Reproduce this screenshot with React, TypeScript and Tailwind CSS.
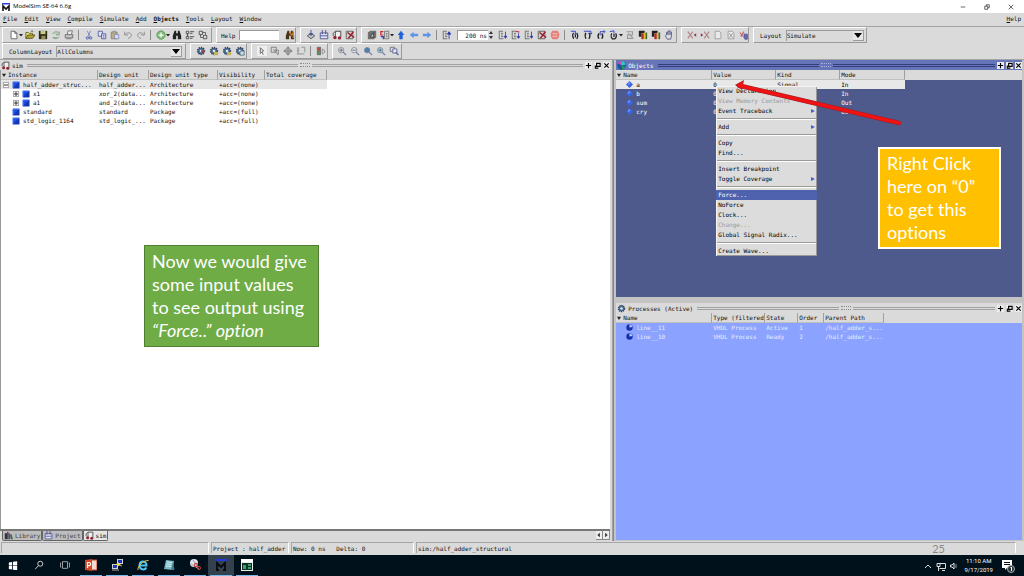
import type { ReactNode } from 'react'
import { clsx } from 'clsx'

/* ---------- icons, all on a 12x12 grid ---------- */

const page = <path d="M2.500 1.500h5l2 2v7h-7z" fill="#e9e9e9" stroke="#999" />

const gear = (
  <>
    <circle cx="6" cy="6" r="4" fill="#4d6f9c" stroke="#33445c" strokeWidth="2" strokeDasharray="1.600 1" />
    <circle cx="6" cy="6" r="1.600" fill="#dfe6ee" />
  </>
)

const lens = (fill: string) => (
  <>
    <circle cx="5" cy="5" r="3.200" fill={fill} stroke="#7b8490" />
    <path d="M7.500 7.500l3.500 3.500" stroke="#7a7fae" strokeWidth="1.500" />
  </>
)

const lines = (
  <path d="M1.500 1v10M1.500 1.500h4.500M1.500 10.500h5M3.500 4h2.500M3.500 6h2M3.500 8h3" fill="none" stroke="#666" />
)

const binoculars = (color: string) => (
  <path d="M3 1h2v3h2V1h2l2 6v4H7V7H5v4H1V7z" fill={color} />
)

const icons: Record<string, ReactNode> = {
  new: <path d="M2.500 1.500h4.500l2.500 2.500v6.500h-7zM7 1.500v2.500h2.500" fill="#fff" stroke="#555" />,
  open: (
    <>
      <path d="M1 10V3h3l1 1h4v2" fill="#e8e07c" stroke="#5e5a1c" />
      <path d="M1 10l2.500-4H12l-3 4z" fill="#b9a730" stroke="#4a4612" />
      <path d="M7 2c1-1 2-1 3 0" fill="none" stroke="#333" />
    </>
  ),
  save: (
    <>
      <path d="M1 1h10v10H1z" fill="#2c2c14" />
      <path d="M3 1h6v4H3z" fill="#c9c98a" />
      <path d="M4 7h5v4H4z" fill="#8f8f5c" />
    </>
  ),
  reload: <path d="M2 5c1-3 5-4 7-2l1-1v4H6l1-1.500M10 8c-2 3-6 3-8 1l5 0" fill="#b7cdb4" stroke="#84a384" />,
  print: (
    <>
      <path d="M4 5l1-4h5L9 5" fill="#eee" stroke="#666" />
      <path d="M1.500 5.500h9v4h-9z" fill="#c4c4c4" stroke="#666" />
      <path d="M3 10.500h6" stroke="#777" />
    </>
  ),
  cut: (
    <>
      <path d="M4 1l3 7M8 1L5 8" stroke="#6f7fc8" />
      <circle cx="4" cy="9.500" r="1.400" fill="none" stroke="#3d4fb0" />
      <circle cx="8" cy="9.500" r="1.400" fill="none" stroke="#3d4fb0" />
    </>
  ),
  copy: (
    <>
      <path d="M1.500 1.500h5v6h-5z" fill="#e2e4f6" stroke="#4a55a0" />
      <path d="M5.500 4.500h5v6h-5z" fill="#e2e4f6" stroke="#4a55a0" />
      <path d="M7 6.500h2M7 8.500h2" stroke="#4a55a0" />
    </>
  ),
  paste: (
    <>
      <path d="M1.500 2.500h7v8h-7z" fill="#b9af86" stroke="#87805e" />
      <path d="M3.500 1.500h3v2h-3z" fill="#ddd" stroke="#888" />
      <path d="M5.500 5.500h5v5h-5z" fill="#dcdff2" stroke="#8389b8" />
    </>
  ),
  undo: <path d="M2 2v4h4M2 6c3-4 8-3 8 0 0 3-3 4-4 4" fill="none" stroke="#888" />,
  redo: <path d="M10 2v4H6M10 6C7 2 2 3 2 6c0 3 3 4 4 4" fill="none" stroke="#888" />,
  add: (
    <>
      <circle cx="6" cy="6" r="5" fill="#7dbb76" stroke="#5b9a56" />
      <path d="M6 3v6M3 6h6" stroke="#fff" strokeWidth="1.500" />
    </>
  ),
  find: binoculars('#222'),
  tree: <path d="M1.500 1.500h3v3h-3zM1.500 7.500h3v3h-3zM3 4v4M6 2h5M6 4h3M6 8h5M6 10h3" fill="none" stroke="#444" />,
  link: (
    <>
      <path d="M1.500 1.500h4v4h-4zM6.500 6.500h4v4h-4z" fill="#ddd" stroke="#444" />
      <path d="M5 3h4v3M3 5v4h3" fill="none" stroke="#555" />
    </>
  ),
  findHelp: (
    <>
      {binoculars('#4a3318')}
      <path d="M5 2l3 4 2-3v7" fill="none" stroke="#d0802a" strokeWidth="1.500" />
    </>
  ),
  compile: (
    <>
      <path d="M1.500 7l4.500-3 4.500 3-4.500 3.500z" fill="#bfc2cf" stroke="#444" />
      <path d="M6 0v6M4 4l2 2.500L8 4" fill="none" stroke="#2b3a9c" />
    </>
  ),
  compileAll: (
    <>
      <path d="M1.500 3.500h9v7h-9z" fill="#e4e4ee" stroke="#444a88" />
      <path d="M4 0v5M8 0v5M2 7h8" stroke="#3542a8" />
    </>
  ),
  simulate: (
    <>
      <path d="M1.500 7V4L4 1.500h6.500V9M4 2v6" fill="#eee" stroke="#333" />
      <circle cx="3.500" cy="9" r="2" fill="#8d2430" />
      <circle cx="9" cy="9.500" r="2" fill="#8d2430" />
    </>
  ),
  stopSim: (
    <>
      <path d="M1.500 1.500h8v9h-8z" fill="#cfcfcf" stroke="#555" />
      <path d="M3 3l8 6M10 2L4 10" stroke="#9c1d26" strokeWidth="1.800" />
    </>
  ),
  dark: (
    <>
      <path d="M1 3l3-2h7v8l-3 2H1z" fill="#707070" />
      <path d="M4 8l4-5v6z" fill="#ccc" stroke="#333" />
    </>
  ),
  restart: (
    <>
      <path d="M5.500 1.500h5v9h-5z" fill="#e2e2e2" stroke="#666" />
      <path d="M7 4h2M7 6h2M7 8h2" stroke="#555" />
      <path d="M4 2H1v4h3" fill="none" stroke="#c22" strokeWidth="1.400" />
      <path d="M1 8h3v3" fill="none" stroke="#2a37b8" strokeWidth="1.400" />
    </>
  ),
  up: <path d="M6 1l4 5H8v5H4V6H2z" fill="#1d62dc" />,
  left: <path d="M1 6l4.500-4v2.500H11v3H5.500V10z" fill="#5f95e8" />,
  right: <path d="M11 6L6.500 2v2.500H1v3h5.500V10z" fill="#5f95e8" />,
  runUp: (
    <>
      {lines}
      <path d="M8.500 11V4M6.500 5l2-3 2 3z" fill="#2b39ad" stroke="#2b39ad" />
    </>
  ),
  run: (
    <>
      {lines}
      <path d="M9 2v7M7.500 7.500L9 10l1.500-2.500z" fill="#2b39ad" stroke="#2b39ad" />
    </>
  ),
  runRed: (
    <>
      {lines}
      <path d="M6 1.500l4 1" stroke="#c5303a" strokeWidth="1.500" />
      <path d="M9 4v5M7.500 8L9 10l1.500-2z" fill="#2b39ad" stroke="#2b39ad" />
    </>
  ),
  stop: (
    <>
      <path d="M3 1h6l2 3v4l-2 3H3L1 8V4z" fill="#e58078" />
      <path d="M3 4.500h6M3 7.500h6" stroke="#f6cfca" />
    </>
  ),
  stepIn: (
    <>
      <path d="M4.500 3.500C3 5 3 8 4.500 10.500M8 3.500c1.500 2 1.500 5 0 7M6.500 6v3" fill="none" stroke="#222" strokeWidth="1.500" />
      <path d="M1 1.500h5.500v4M5 4.500L6.500 6 8 4.500" fill="none" stroke="#3c49c0" strokeWidth="1.200" />
    </>
  ),
  stepOver: (
    <>
      <path d="M3.500 3.500C2.500 5 2.500 8 3.500 10.500M7 3.500c1.500 2 1.500 5 0 7" fill="none" stroke="#222" strokeWidth="1.600" />
      <path d="M1 1.500h8.500v3.500M8 3.500L9.500 5 11 3.500" fill="none" stroke="#3c49c0" strokeWidth="1.200" />
    </>
  ),
  stepOut: (
    <>
      <path d="M3.500 4C2 6 2 8 3.500 10.500M7 4c1.500 2 1.500 4 0 6.500" fill="none" stroke="#222" strokeWidth="1.600" />
      <path d="M5 6.500V2h5.500M9 .500l2 1.500-2 1.500" fill="none" stroke="#3c49c0" strokeWidth="1.200" />
    </>
  ),
  stepCur: (
    <>
      <path d="M3.500 4C2 6 2.500 9 4 10.500h3C9 9 9 6 8 4M6 4.500v4" fill="none" stroke="#222" strokeWidth="1.500" />
      <path d="M1 2l5-1v3" fill="none" stroke="#3c49c0" strokeWidth="1.200" />
    </>
  ),
  trace: <path d="M2 2h7v4H3v4h7M4 4l6 6" fill="none" stroke="#999" strokeWidth="1.300" />,
  memProf: (
    <>
      <path d="M1 1h7v3H4v4H1z" fill="#222" />
      <path d="M4 4h3v7H4z" fill="#b32a1e" />
      <path d="M7 3h2v8H7z" fill="#e0c030" />
      <path d="M9 3h2v8H9z" fill="#3f6b2e" />
    </>
  ),
  hand: <path d="M3 6V3h1.500V1.500H6V1h1.500v1.500H9V7l-1 4H4L1.500 7zM4.500 3v3M6 2v4M7.500 3v3" fill="#dcdce6" stroke="#50547c" />,
  cross: (
    <>
      <path d="M1 2l6 8M7 2l-6 8" stroke="#b47f86" strokeWidth="1.300" />
      <path d="M11 4L8 6l3 2z" fill="#8a3a45" />
    </>
  ),
  crossR: (
    <>
      <path d="M5 2l6 8M11 2l-6 8" stroke="#b47f86" strokeWidth="1.300" />
      <path d="M1 4l3 2-3 2z" fill="#8a3a45" />
    </>
  ),
  page,
  pageX: (
    <>
      {page}
      <path d="M4 4l4 5M8 4L4 9" stroke="#888" />
    </>
  ),
  cover: (
    <>
      <path d="M1 3l5 6M6 2L2 8" stroke="#c0606a" strokeWidth="1.300" />
      <path d="M6 5h4v6H7z" fill="#6a6fb4" stroke="#4b4f94" />
    </>
  ),
  gear,
  gearRed: (
    <>
      {gear}
      <path d="M6 5h4v3H6z" fill="#a8473c" />
    </>
  ),
  gearYellow: (
    <>
      {gear}
      <path d="M6 7h5v4H6z" fill="#c2b25c" />
    </>
  ),
  gearPage: (
    <>
      {gear}
      <path d="M6 6h5v5H6z" fill="#bfe3ea" stroke="#567" />
    </>
  ),
  pointer: (
    <>
      <path d="M0 0h12v12H0z" fill="#eee" />
      <path d="M4 2v7l2-2 1.500 3.500M4 2l4 4H6" fill="none" stroke="#555" />
    </>
  ),
  zoomArea: <path d="M1.500 1.500h6v6h-6zM5 5h5v5M4 4l6 7" fill="none" stroke="#777" />,
  pan: <path d="M6 1v10M1 6h10M4.500 2.500L6 1l1.500 1.500M4.500 9.500L6 11l1.500-1.500M2.500 4.500L1 6l1.500 1.500M9.500 4.500L11 6 9.500 7.500M3.500 3.500h5v5h-5z" fill="none" stroke="#777" />,
  edit: <path d="M1 2.500h3M1 5.500h3M1 9.500h9M6.500 1.500h4v6M2.500 3v7" fill="none" stroke="#888" />,
  traffic: (
    <>
      <path d="M1 1h5v10H1z" fill="#777" />
      <path d="M2 2h3v3H2z" fill="#c4443c" />
      <path d="M2 7h3v3H2z" fill="#5a9150" />
      <path d="M7.500 3.500l3 2v2l-3 2z" fill="none" stroke="#888" />
    </>
  ),
  zoomIn: (
    <>
      {lens('#e6e9ee')}
      <path d="M5 3v4M3 5h4" stroke="#555" />
    </>
  ),
  zoomOut: (
    <>
      {lens('#e6e9ee')}
      <path d="M3 5h4" stroke="#555" />
    </>
  ),
  zoomFull: lens('#4c7fae'),
  zoomCursor: (
    <>
      {lens('#b9d3e2')}
      <path d="M3 5h4M5 3v4" stroke="#3a6c8c" />
    </>
  ),
  zoomPages: (
    <>
      <path d="M1.500 1.500h5v5h-5z" fill="#ddd" stroke="#667" />
      <path d="M4.500 3.500h5v5h-5z" fill="#e4e4f0" stroke="#5a60a0" />
      <path d="M8 7.500l3.500 3.500" stroke="#5a60a0" strokeWidth="1.500" />
    </>
  ),
  block: (
    <>
      <path d="M1 1h10v10H1z" fill="#1f4fe0" />
      <path d="M1 11L11 1v10z" fill="#1238b4" />
      <path d="M1.500 10.500v-9h9" fill="none" stroke="#6d92f5" />
    </>
  ),
  signal: (
    <>
      <path d="M6 0l6 6-6 6-6-6z" fill="#3a66e6" />
      <path d="M6 2L3 5l1.500 1.500 3-3z" fill="#86a8fa" />
    </>
  ),
  process: (
    <>
      <circle cx="6" cy="6" r="5.500" fill="#1a2fae" />
      <path d="M6 6V1a5 5 0 0 1 5 4z" fill="#b8cbff" />
    </>
  ),
  objects: (
    <>
      <circle cx="6" cy="6" r="5.500" fill="#15589c" />
      <path d="M6 6L1 3a5.500 5.500 0 0 1 5-3z" fill="#d34cc4" />
      <path d="M6 6V0a6 6 0 0 1 5 5z" fill="#31d2c0" />
      <path d="M6 6l5 2-4 4z" fill="#2f9a50" />
    </>
  ),
  books: (
    <>
      <path d="M1 3h3v8H1z" fill="#333" />
      <path d="M4 1h2v10H4z" fill="#a33040" />
      <path d="M6 3h2v8H6z" fill="#334fae" />
      <path d="M8 5l2-1 2 7H9z" fill="#3c6a3e" />
    </>
  ),
}

function Icon({ name, className = 'size-2.5' }: { name: string; className?: string }) {
  return (
    <svg viewBox="0 0 12 12" className={clsx('shrink-0', className)} aria-hidden="true">
      {icons[name]}
    </svg>
  )
}

/* ---------- toolbars ---------- */

function Caret() {
  return (
    <svg viewBox="0 0 4 4" className="-ml-px size-1 shrink-0" aria-hidden="true">
      <path d="M0 1h4L2 3.500z" fill="#222" />
    </svg>
  )
}

function Tools({ names }: { names: string[] }) {
  return (
    <>
      {names.map((name, i) => {
        if (name === '|') return <span key={i} className="mx-[3px] h-2.5 w-px bg-[#8c8c8c]" />
        if (name === 'v') return <Caret key={i} />
        return (
          <button key={i} type="button" aria-label={name} className="flex w-[13px] shrink-0 justify-center">
            <Icon name={name} />
          </button>
        )
      })}
    </>
  )
}

function Group({ children, className }: { children: ReactNode; className?: string }) {
  return (
    <div
      className={clsx(
        'flex h-4 shrink-0 items-center border border-t-white border-r-[#9a9a9a] border-b-[#9a9a9a] border-l-white',
        className
      )}
    >
      {children}
    </div>
  )
}

function Dropdown({ id, label, value, className }: { id: string; label: string; value: string; className: string }) {
  return (
    <>
      <label htmlFor={id}>{label}</label>
      <div className={clsx('relative ml-1 h-[11px] border-t border-l border-[#9c9c9c]', className)}>
        <select id={id} className="block h-full w-full appearance-none leading-[10px] outline-none">
          <option>{value}</option>
        </select>
        <span className="pointer-events-none absolute top-0 right-0 flex h-full w-[11px] items-center justify-center border-r border-b border-[#9c9c9c] bg-[#e6e6e6]">
          <svg viewBox="0 0 8 5" className="h-[5px] w-2">
            <path d="M0 0h8L4 5z" fill="#000" />
          </svg>
        </span>
      </div>
    </>
  )
}

function Toolbars() {
  return (
    <div className="shrink-0 border-b border-[#a5a5a5]">
      <div className="flex h-[17px] gap-1 border-t border-[#a5a5a5] pl-0.5">
        <Group className="w-[210px] pl-1">
          <Tools names={['new', 'v', 'open', 'save', 'reload', 'print', '|', 'cut', 'copy', 'paste', 'undo', 'redo', '|', 'add', 'v', 'find', 'tree', 'link']} />
        </Group>
        <Group className="w-20 pl-1">
          <label htmlFor="help">Help</label>
          <input id="help" className="mx-1 h-2.5 w-10 border-t border-l border-[#999] bg-white outline-none" />
          <Tools names={['findHelp']} />
        </Group>
        <Group className="w-[57px] pl-[3px]">
          <Tools names={['compile', 'compileAll', 'simulate', 'stopSim']} />
        </Group>
        <Group className="w-[316px] pl-[3px]">
          <Tools names={['dark', 'restart', 'v', 'up', 'left', 'right', '|', 'runUp']} />
          <input
            aria-label="Run length"
            defaultValue="200 ns"
            className="ml-1 h-2.5 w-[31px] border-t border-l border-[#999] bg-white pr-px text-right outline-none"
          />
          <svg viewBox="0 0 6 10" className="mr-0.5 h-2.5 w-1.5 shrink-0">
            <path d="M1 4h4L3 1zM1 6h4L3 9z" fill="#333" />
          </svg>
          <Tools names={['run', 'runRed', 'run', 'stopSim', 'stop', '|', 'stepIn', 'stepOver', 'stepOut', 'stepCur', 'v', 'trace', 'memProf', 'memProf', 'hand']} />
        </Group>
        <Group className="w-[68px] pl-[3px]">
          <Tools names={['cross', 'crossR', 'page', 'pageX', 'cover']} />
        </Group>
        <Group className="w-[114px] pl-[6px]">
          <Dropdown id="layout" label="Layout" value="Simulate" className="w-[78px]" />
        </Group>
      </div>
      <div className="flex h-4 gap-1 pl-0.5">
        <Group className="w-[184px] pl-[6px]">
          <Dropdown id="columns" label="ColumnLayout" value="AllColumns" className="w-[126px]" />
        </Group>
        <Group className="w-[57px] pl-[3px]">
          <Tools names={['gearRed', 'gearYellow', 'gearYellow', 'gearPage']} />
        </Group>
        <Group className="w-[77px] pl-[3px]">
          <Tools names={['pointer', 'zoomArea', 'pan', 'edit', '|', 'traffic']} />
        </Group>
        <Group className="w-[70px] pl-[2px]">
          <Tools names={['zoomIn', 'zoomOut', 'zoomFull', 'zoomCursor', 'zoomPages']} />
        </Group>
      </div>
    </div>
  )
}

/* ---------- panels ---------- */

function PanelTitle({ icon, title, active }: { icon: string; title: string; active?: boolean }) {
  const line = active ? 'border-[#333f7c]' : 'border-[#a0a0a0]'
  return (
    <div
      className={clsx(
        'flex h-2.5 shrink-0 items-center gap-0.5 pl-px',
        active ? 'bg-[#6675b8] text-white' : 'bg-[#dadada]'
      )}
    >
      <Icon name={icon} className="size-[9px]" />
      <span>{title}</span>
      <span className={clsx('ml-0.5 h-[3px] flex-1 border-y', line)} />
      <span className={clsx('h-1 w-2.5 border-y border-dotted', active ? 'border-[#a9b4e4]' : 'border-[#888]')} />
      <span className={clsx('h-[3px] flex-1 border-y', line)} />
      {['M4 1v6M1 4h6', 'M3 1.500h4v3.500H3zM1.500 4v3h3.500', 'M1.500 1.500l5 5M6.500 1.500l-5 5'].map(d => (
        <button key={d} type="button" aria-label="Panel control" className="flex size-[7px] items-center justify-center bg-[#ececec]">
          <svg viewBox="0 0 8 8" className="size-[7px]">
            <path d={d} fill="none" stroke="#000" strokeWidth="1.300" />
          </svg>
        </button>
      ))}
    </div>
  )
}

const cell = 'overflow-hidden p-0 text-left font-normal whitespace-nowrap'

function HeaderRow({ labels }: { labels: string[] }) {
  return (
    <thead className="text-[#111]">
      <tr className="h-2.5 bg-[#dadada] leading-[9px]">
        {labels.map((label, i) => (
          <th key={label} className={clsx(cell, 'border-r border-b border-[#a0a0a0] border-b-[#c0c0c0]', i > 0 && 'pl-px')}>
            {i === 0 && (
              <svg viewBox="0 0 6 6" className="mr-0.5 ml-px inline size-1 align-baseline">
                <path d="M0 1h6L3 6z" fill="#222" />
              </svg>
            )}
            {label}
          </th>
        ))}
      </tr>
    </thead>
  )
}

const instances = [
  { name: 'half_adder_struc...', unit: 'half_adder...', type: 'Architecture', acc: '+acc=(none)', box: '-', depth: 0 },
  { name: 'x1', unit: 'xor_2(data...', type: 'Architecture', acc: '+acc=(none)', box: '+', depth: 1 },
  { name: 'a1', unit: 'and_2(data...', type: 'Architecture', acc: '+acc=(none)', box: '+', depth: 1 },
  { name: 'standard', unit: 'standard', type: 'Package', acc: '+acc=(full)', box: '', depth: 0 },
  { name: 'std_logic_1164', unit: 'std_logic_...', type: 'Package', acc: '+acc=(full)', box: '', depth: 0 },
]

function SimPanel() {
  return (
    <section className="flex flex-[615] flex-col border-r border-[#a0a0a0] pr-0.5">
      <PanelTitle icon="simulate" title="sim" />
      <div className="flex-1 border-l border-[#999] bg-white">
        <div className="bg-linear-to-b from-[#dadada] from-[10px] to-white to-[10px]">
          <table className="w-[326px] table-fixed border-separate border-spacing-0">
            <colgroup>
              <col className="w-[97px]" />
              <col className="w-[51px]" />
              <col className="w-[69px]" />
              <col className="w-[47px]" />
              <col />
            </colgroup>
            <HeaderRow labels={['Instance', 'Design unit', 'Design unit type', 'Visibility', 'Total coverage']} />
            <tbody>
              {instances.map((row, i) => (
                <tr key={row.name} className={clsx('h-[9px] leading-[9px]', i === 0 && 'bg-[#e6e6e6]')}>
                  <td className={cell}>
                    <div className={clsx('flex items-center', row.depth ? 'pl-3' : 'pl-0.5')}>
                      <span className="flex w-[9px] items-center">
                        {row.box && (
                          <button type="button" aria-label="Toggle" className="flex size-[6px] items-center justify-center border border-[#aaa] bg-white">
                            <svg viewBox="0 0 4 4" className="size-1">
                              <path d={row.box === '+' ? 'M0 2h4M2 0v4' : 'M0 2h4'} stroke="#333" />
                            </svg>
                          </button>
                        )}
                      </span>
                      <Icon name="block" className="mr-[3px] size-2" />
                      {row.name}
                    </div>
                  </td>
                  <td className={clsx(cell, 'pl-px')}>{row.unit}</td>
                  <td className={clsx(cell, 'pl-px')}>{row.type}</td>
                  <td className={clsx(cell, 'pl-px')}>{row.acc}</td>
                  <td className={cell} />
                </tr>
              ))}
            </tbody>
          </table>
        </div>
      </div>
      <div className="flex h-3 shrink-0 items-start border-t-2 border-[#777] pl-0.5">
        {[
          { icon: 'books', label: 'Library' },
          { icon: 'compileAll', label: 'Project' },
          { icon: 'simulate', label: 'sim' },
        ].map(tab => (
          <button
            key={tab.label}
            type="button"
            className={clsx(
              'flex h-2.5 items-center gap-0.5 rounded-b-xs border-r border-b border-l border-[#666] px-px leading-[9px]',
              tab.label === 'sim' ? 'bg-[#e6e6e6]' : 'bg-[#bdbdbd] text-[#444]'
            )}
          >
            <Icon name={tab.icon} className="size-[9px]" />
            {tab.label}
          </button>
        ))}
        <span className="flex-1" />
        {['M4 1L1 3.500 4 6z', 'M2 1l3 2.500L2 6z'].map(d => (
          <button key={d} type="button" aria-label="Scroll tabs" className="flex h-[9px] w-[7px] items-center justify-center border-r border-b border-[#888] bg-[#eee]">
            <svg viewBox="0 0 6 7" className="size-1.5">
              <path d={d} fill="#333" />
            </svg>
          </button>
        ))}
      </div>
    </section>
  )
}

const signals = [
  { name: 'a', mode: 'In' },
  { name: 'b', mode: 'In' },
  { name: 'sum', mode: 'Out' },
  { name: 'cry', mode: 'Out' },
]

const menu = [
  ['View Declaration', 'View Memory Contents', 'Event Traceback'],
  ['Add'],
  ['Copy', 'Find...'],
  ['Insert Breakpoint', 'Toggle Coverage'],
  ['Force...', 'NoForce', 'Clock...', 'Change...', 'Global Signal Radix...'],
  ['Create Wave...'],
]
const disabled = ['View Memory Contents', 'Change...']
const submenus = ['Event Traceback', 'Add', 'Toggle Coverage']

function ContextMenu() {
  return (
    <div role="menu" className="absolute top-[26px] left-[100px] w-[101px] bg-[#dcdcdc] text-black shadow-[inset_1px_1px_#f4f4f4,inset_-1px_-1px_#999]">
      {menu.map((group, i) => (
        <div key={i}>
          {i > 0 && <div className="mx-px my-0.5 h-0.5 border-t border-b border-t-[#999] border-b-white" />}
          {group.map(item => (
            <button
              key={item}
              type="button"
              role="menuitem"
              disabled={disabled.includes(item)}
              className={clsx(
                'flex h-2.5 w-full items-center justify-between pr-0.5 pl-[2px] leading-[10px] disabled:text-[#999]',
                item === 'Force...' && 'bg-[#4f62ae] text-white'
              )}
            >
              {item}
              {submenus.includes(item) && (
                <svg viewBox="0 0 4 6" className="h-1.5 w-1">
                  <path d="M0 1l4 2-4 2z" fill="#4a5fd0" />
                </svg>
              )}
            </button>
          ))}
        </div>
      ))}
    </div>
  )
}

function ObjectsPanel() {
  return (
    <section className="relative flex flex-1 flex-col bg-[#4f5a8c] text-white">
      <PanelTitle icon="objects" title="Objects" active />
      <div className="bg-linear-to-b from-[#dadada] from-[10px] to-transparent to-[10px]">
        <table className="w-[289px] table-fixed border-separate border-spacing-0">
          <colgroup>
            <col className="w-24" />
            <col className="w-16" />
            <col className="w-16" />
            <col />
          </colgroup>
          <HeaderRow labels={['Name', 'Value', 'Kind', 'Mode']} />
          <tbody>
            {signals.map((s, i) => (
              <tr key={s.name} className={clsx('h-[9px] leading-[9px]', i === 0 && 'bg-[#e8e8e8] text-black')}>
                <td className={cell}>
                  <div className="flex items-center gap-[3px] pl-2.5">
                    <Icon name="signal" className="size-[7px]" />
                    {s.name}
                  </div>
                </td>
                <td className={clsx(cell, 'pl-px')}>0</td>
                <td className={clsx(cell, 'pl-px')}>{i === 0 && 'Signal'}</td>
                <td className={clsx(cell, 'pl-px')}>{s.mode}</td>
              </tr>
            ))}
          </tbody>
        </table>
      </div>
      <ContextMenu />
    </section>
  )
}

const processes = [
  ['line__11', 'VHDL Process', 'Active', '1', '/half_adder_s...'],
  ['line__10', 'VHDL Process', 'Ready', '2', '/half_adder_s...'],
]

function ProcessesPanel() {
  return (
    <section className="flex flex-1 flex-col bg-[#8ba3ff]">
      <PanelTitle icon="gear" title="Processes (Active)" />
      <div className="bg-linear-to-b from-[#dadada] from-[10px] to-transparent to-[10px]">
        <table className="w-[268px] table-fixed border-separate border-spacing-0">
          <colgroup>
            <col className="w-24" />
            <col className="w-[53px]" />
            <col className="w-[33px]" />
            <col className="w-[26px]" />
            <col />
          </colgroup>
          <HeaderRow labels={['Name', 'Type (filtered', 'State', 'Order', 'Parent Path']} />
          <tbody className="text-[#e6ecff]">
            {processes.map(([name, ...rest]) => (
              <tr key={name} className="h-[9px] leading-[9px]">
                <td className={cell}>
                  <div className="flex items-center gap-[3px] pl-2.5">
                    <Icon name="process" className="size-[7px]" />
                    {name}
                  </div>
                </td>
                {rest.map(text => (
                  <td key={text} className={clsx(cell, 'pl-px')}>{text}</td>
                ))}
              </tr>
            ))}
          </tbody>
        </table>
      </div>
    </section>
  )
}

/* ---------- window chrome ---------- */

function TitleBar() {
  return (
    <header className="flex h-[13px] shrink-0 items-center bg-white pr-2.5 pl-0.5 font-['Open_Sans',sans-serif] text-[6px]">
      <svg viewBox="0 0 8 8" className="mr-[3px] size-2">
        <path d="M0 0h8v1.500H0z" fill="#2a41d8" />
        <path d="M1 8V3l3 3 3-3v5" fill="none" stroke="#111" strokeWidth="1.600" />
      </svg>
      <h1 className="flex-1 text-black">ModelSim SE-64 6.6g</h1>
      <div className="flex gap-[18px]">
        {['M1 4h6', 'M1 3h4v4H1zM3 3V1h4v4H5', 'M1 1l6 6M7 1L1 7'].map(d => (
          <button key={d} type="button" aria-label="Window control">
            <svg viewBox="0 0 8 8" className="size-1.5">
              <path d={d} fill="none" stroke="#333" />
            </svg>
          </button>
        ))}
      </div>
    </header>
  )
}

const menus = ['File', 'Edit', 'View', 'Compile', 'Simulate', 'Add', 'Objects', 'Tools', 'Layout', 'Window']

function MenuBar() {
  return (
    <nav className="flex h-[13px] shrink-0 items-center gap-[7px] px-[3px] pb-0.5">
      {[...menus, 'Help'].map(m => (
        <button key={m} type="button" className={clsx(m === 'Objects' && 'font-bold', m === 'Help' && 'ml-auto')}>
          <span className="underline">{m[0]}</span>
          {m.slice(1)}
        </button>
      ))}
    </nav>
  )
}

function StatusBar() {
  const field = 'border-t border-l border-[#a5a5a5] border-r border-r-white pl-px'
  return (
    <footer className="relative flex h-[14px] shrink-0 gap-0.5 pt-px pb-0.5 pl-px leading-[11px]">
      <span className={clsx(field, 'w-[208px]')} />
      <span className={clsx(field, 'w-[78px]')}>Project : half_adder</span>
      <span className={clsx(field, 'w-[123px] whitespace-pre')}>{'Now: 0 ns   Delta: 0'}</span>
      <span className={clsx(field, 'mr-2 flex-1')}>sim:/half_adder_structural</span>
      <span className="absolute top-0.5 right-[79px] font-[Lato,sans-serif] text-[11px] text-[#8a8a8a]">25</span>
    </footer>
  )
}

const apps: { label: string; running?: boolean; active?: boolean; art: ReactNode }[] = [
  { label: 'Start', art: <path d="M1 3l4-.6v4.100H1zM6 2.200L11 1.500v5H6zM1 7.300h4v4.100L1 10.800zM6 7.300h5v5l-5-.7z" fill="#fff" /> },
  {
    label: 'Search',
    art: (
      <>
        <circle cx="7.500" cy="4.500" r="3" fill="none" stroke="#ddd" strokeWidth="1.100" />
        <path d="M5.300 6.700L1.500 11" stroke="#ddd" strokeWidth="1.100" />
      </>
    ),
  },
  { label: 'Task view', art: <path d="M3 2h6v8H3zM1.500 3.500h-1v5h1M10.500 3.500h1v5h-1" fill="none" stroke="#bbb" /> },
  {
    label: 'PowerPoint',
    running: true,
    art: (
      <>
        <path d="M6 1h6v10H6z" fill="#f3d9d2" stroke="#c8452b" />
        <path d="M0 1l7-1v12l-7-1z" fill="#d24726" />
        <path d="M2.500 9V3.500h1.500a1.500 1.500 0 0 1 0 3.200H2.500" fill="none" stroke="#fff" strokeWidth="1.200" />
      </>
    ),
  },
  {
    label: 'PuTTY',
    running: true,
    art: (
      <>
        <path d="M6 0h6v5H6zM1 5h6v5H1z" fill="#d0d0d0" />
        <path d="M7 1h4v3H7zM2 6h4v3H2z" fill="#1d33c0" />
        <path d="M1 11h7M8 6l3 1" stroke="#aaa" />
        <path d="M8 3L4 6h3l-2 3 5-4H7z" fill="#f3e22c" />
      </>
    ),
  },
  {
    label: 'Internet Explorer',
    running: true,
    art: (
      <>
        <path d="M2.500 6.500h7C9.500 1 2.500 1.500 2.500 6.500c0 4.500 5.500 5 6.800 2" fill="none" stroke="#4fc3f0" strokeWidth="2" />
        <path d="M1 11C0 7 7 1 11.500 1.500" fill="none" stroke="#f0c53c" />
      </>
    ),
  },
  {
    label: 'Notepad',
    running: true,
    art: (
      <>
        <path d="M3 1l8 1-1.500 9L1 10z" fill="#79b9c4" />
        <path d="M4 3l5 .6M3.500 5l5 .6M3 7l5 .6" stroke="#d8eef2" />
        <path d="M10 3l1.500 8H8z" fill="#3f7f8e" />
      </>
    ),
  },
  {
    label: 'Snipping Tool',
    running: true,
    art: (
      <>
        <circle cx="5" cy="4" r="4" fill="#dfe2ea" />
        <path d="M2 5l8 5M4 1l5 7" stroke="#9aa0ae" />
        <circle cx="7" cy="6" r="1.600" fill="none" stroke="#cf4038" strokeWidth="1.200" />
        <circle cx="10" cy="9" r="1.500" fill="none" stroke="#cf4038" />
      </>
    ),
  },
  {
    label: 'ModelSim',
    running: true,
    active: true,
    art: (
      <>
        <path d="M0 0h12v2H0z" fill="#2437d8" />
        <path d="M2 11V4l4 4 4-4v7M1 11h3M8 11h3" fill="none" stroke="#0a0a10" strokeWidth="1.800" />
      </>
    ),
  },
  {
    label: 'Spreadsheet',
    running: true,
    art: (
      <>
        <path d="M0 0h12v12H0z" fill="#e6eee8" />
        <path d="M0 0h12v3H0z" fill="#fff" />
        <path d="M1 4h10v7H1z" fill="#14302a" />
        <path d="M2 6h3v4H2zM7 5h3v2H7zM7 8h3v2H7z" fill="#3aa06c" />
      </>
    ),
  },
]

function Taskbar() {
  return (
    <div className="flex h-[21px] shrink-0 items-stretch bg-[#00111c] font-[Roboto,sans-serif] text-[6px] text-white">
      {apps.map(app => (
        <button
          key={app.label}
          type="button"
          aria-label={app.label}
          className={clsx('flex w-[26px] items-center justify-center', app.active && 'bg-[#33414c]')}
        >
          <span className={clsx('flex h-full w-[22px] items-center justify-center border-b', app.running ? 'border-[#76b9ed]' : 'border-transparent')}>
            <svg viewBox="0 0 12 12" className={app.running ? 'size-3' : 'size-2.5'}>
              {app.art}
            </svg>
          </span>
        </button>
      ))}
      <div className="ml-auto flex items-center gap-1.5 pr-[9px]">
        <svg viewBox="0 0 34 12" className="h-3 w-[34px]" fill="none" stroke="#ddd">
          <path d="M1 8l3-3 3 3" />
          <path d="M14.500 3.500h7v5h-6M13 3.500h3v3h-3zM14.500 7v4M18 10.500h3" />
          <path d="M26.500 5h1.500l2-2v6l-2-2h-1.500z" />
          <path d="M32 4v4" stroke="#999" />
        </svg>
        <div className="pb-0.5 text-center leading-[9px]">
          <div>11:10 AM</div>
          <div>9/17/2019</div>
        </div>
        <svg viewBox="0 0 14 14" className="ml-0.5 size-3.5">
          <path d="M1 1h10v8H6l-2 2V9H1z" fill="#fff" />
          <path d="M3 3.500h6M3 5.500h6" stroke="#00111c" />
          <circle cx="10" cy="10" r="3.500" fill="#26323c" stroke="#aaa" />
          <path d="M9.500 9l1-1v4" fill="none" stroke="#fff" />
        </svg>
      </div>
    </div>
  )
}

const note = "absolute px-[7px] font-[Lato,sans-serif] text-lg leading-[23px] text-white [font-variant-ligatures:none]"

export default function App() {
  return (
    <div className="relative flex h-screen flex-col overflow-hidden bg-[#dadada] font-['DejaVu_Sans_Mono',monospace] text-[6px] text-[#111]">
      <TitleBar />
      <MenuBar />
      <Toolbars />
      <main className="flex min-h-0 flex-1">
        <SimPanel />
        <div className="flex flex-[409] flex-col gap-1.5 border-l border-[#888] bg-[#c4c4c4] pr-0.5 pb-px pl-0.5">
          <ObjectsPanel />
          <ProcessesPanel />
        </div>
      </main>
      <StatusBar />
      <Taskbar />

      {/* slide annotations */}
      <p className={clsx(note, 'top-[245px] left-36 w-[175px] border border-[#507e32] bg-[#6fac46] py-1')}>
        Now we would give some input values to see output using <i>“Force..” option</i>
      </p>
      <p className={clsx(note, 'top-[147px] left-[878px] w-[123px] border-2 border-white bg-[#ffc000] py-[3px]')}>
        Right Click here on “0” to get this options
      </p>
      <svg viewBox="0 0 172 46" className="pointer-events-none absolute top-20 left-[732px] h-[46px] w-[172px]">
        <path d="M7 5.500L167 43" stroke="#8e2433" strokeWidth="4.500" strokeLinecap="round" />
        <path d="M3 5l9-5-2 10z" fill="#8e2433" />
        <path d="M7 5.500L167 43" stroke="#ee1212" strokeWidth="3.500" strokeLinecap="round" />
        <path d="M4 5l7-4-1 8z" fill="#ee1212" />
      </svg>
    </div>
  )
}
